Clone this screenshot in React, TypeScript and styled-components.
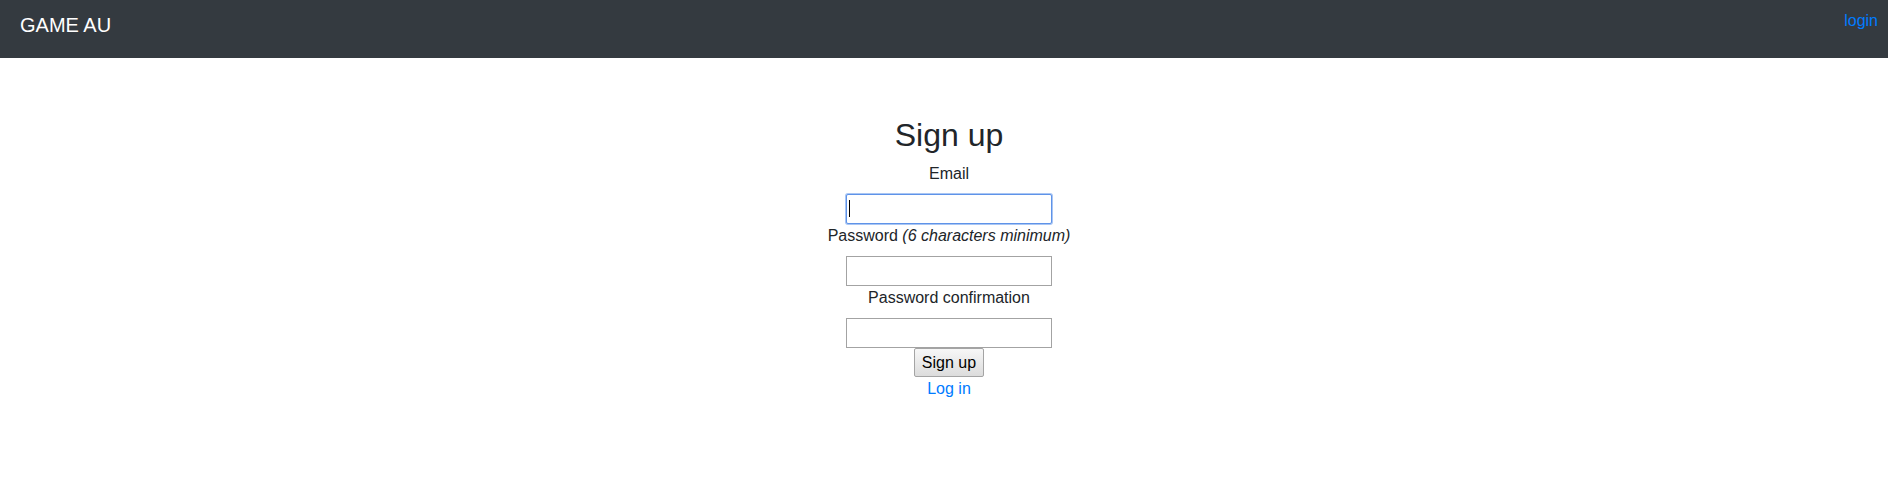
import React, {useState} from 'react'
import styled, {createGlobalStyle} from 'styled-components'

const GlobalStyle = createGlobalStyle`
	html, body {
		margin: 0;
		padding: 0;
		background: #fff;
	}
	body {
		font-family: "Liberation Sans", Arial, Helvetica, sans-serif;
		font-size: 16px;
		line-height: 1.5;
		color: #212529;
	}
	* {
		box-sizing: border-box;
	}
`

function App() {

	/****************************************************** contents definition ***************************************************/
	const [values, setValues] = useState({email: '', password: '', passwordConfirmation: ''})

	const changeValues = (e: React.ChangeEvent<HTMLInputElement>) => {
		const {name, value} = e.target
		setValues({...values, [name]: value})
	}

	return (
		<>
			<GlobalStyle />
			<NavBar>
				<Brand>GAME AU</Brand>
				<NavLink href={'#'}>login</NavLink>
			</NavBar>
			<Main>
				<Title>Sign up</Title>
				<SignForm onSubmit={(e) => e.preventDefault()}>
					<Label htmlFor={'user_email'}>Email</Label>
					<FieldWrap>
						<Field
							id={'user_email'}
							type={'email'}
							name={'email'}
							value={values.email}
							onChange={changeValues}
							autoFocus
							$focused
						/>
						{values.email === '' && <Caret />}
					</FieldWrap>
					<Label htmlFor={'user_password'}>
						Password <em>(6 characters minimum)</em>
					</Label>
					<Field
						id={'user_password'}
						type={'password'}
						name={'password'}
						value={values.password}
						onChange={changeValues}
					/>
					<Label htmlFor={'user_password_confirmation'}>Password confirmation</Label>
					<Field
						id={'user_password_confirmation'}
						type={'password'}
						name={'passwordConfirmation'}
						value={values.passwordConfirmation}
						onChange={changeValues}
					/>
					<SubmitButton type={'submit'}>Sign up</SubmitButton>
				</SignForm>
				<FormLink href={'#'}>Log in</FormLink>
			</Main>
		</>
	)
}

const NavBar = styled.nav`
	display: flex;
	justify-content: space-between;
	align-items: flex-start;
	height: 58px;
	background-color: #343a40;
`

const Brand = styled.div`
	padding: 10px 0 0 20px;
	font-size: 20px;
	line-height: 30px;
	color: #fff;
`

const NavLink = styled.a`
	padding: 9px 10px 0 0;
	line-height: 24px;
	color: #007bff;
	text-decoration: none;
`

const Main = styled.main`
	display: flex;
	flex-direction: column;
	align-items: center;
	padding: 58px 0 0 10px;
	text-align: center;
`

const Title = styled.h2`
	margin: 0 0 8px;
	font-size: 32px;
	font-weight: 500;
	line-height: 1.2;
`

const SignForm = styled.form`
	display: flex;
	flex-direction: column;
	align-items: center;
`

const Label = styled.label`
	display: block;
	margin-bottom: 8px;
	line-height: 24px;

	em {
		font-style: italic;
	}
`

const FieldWrap = styled.div`
	position: relative;
	display: flex;
`

const Caret = styled.span`
	position: absolute;
	left: 3px;
	top: 6px;
	width: 1px;
	height: 17px;
	background: #000;
	pointer-events: none;
`

const Field = styled.input<{$focused?: boolean}>`
	width: 206px;
	height: 30px;
	padding: 1px 2px;
	border: 1px solid ${({$focused}) => ($focused ? '#5f93e8' : '#a3a3a3')};
	border-radius: ${({$focused}) => ($focused ? '2px' : '0')};
	box-shadow: ${({$focused}) => ($focused ? '0 0 0 1px #a9c6f4' : 'none')};
	font-family: inherit;
	font-size: 16px;
	color: #000;
	background: #fff;
	outline: none;
	caret-color: transparent;
`

const SubmitButton = styled.button`
	width: 70px;
	height: 29px;
	padding: 0 6px;
	border: 1px solid #a4a4a4;
	border-radius: 2px;
	background: linear-gradient(#f7f7f7, #dcdcdc);
	font-family: inherit;
	font-size: 16px;
	color: #000;
	cursor: pointer;
`

const FormLink = styled.a`
	line-height: 24px;
	color: #007bff;
	text-decoration: none;
`

export default App
